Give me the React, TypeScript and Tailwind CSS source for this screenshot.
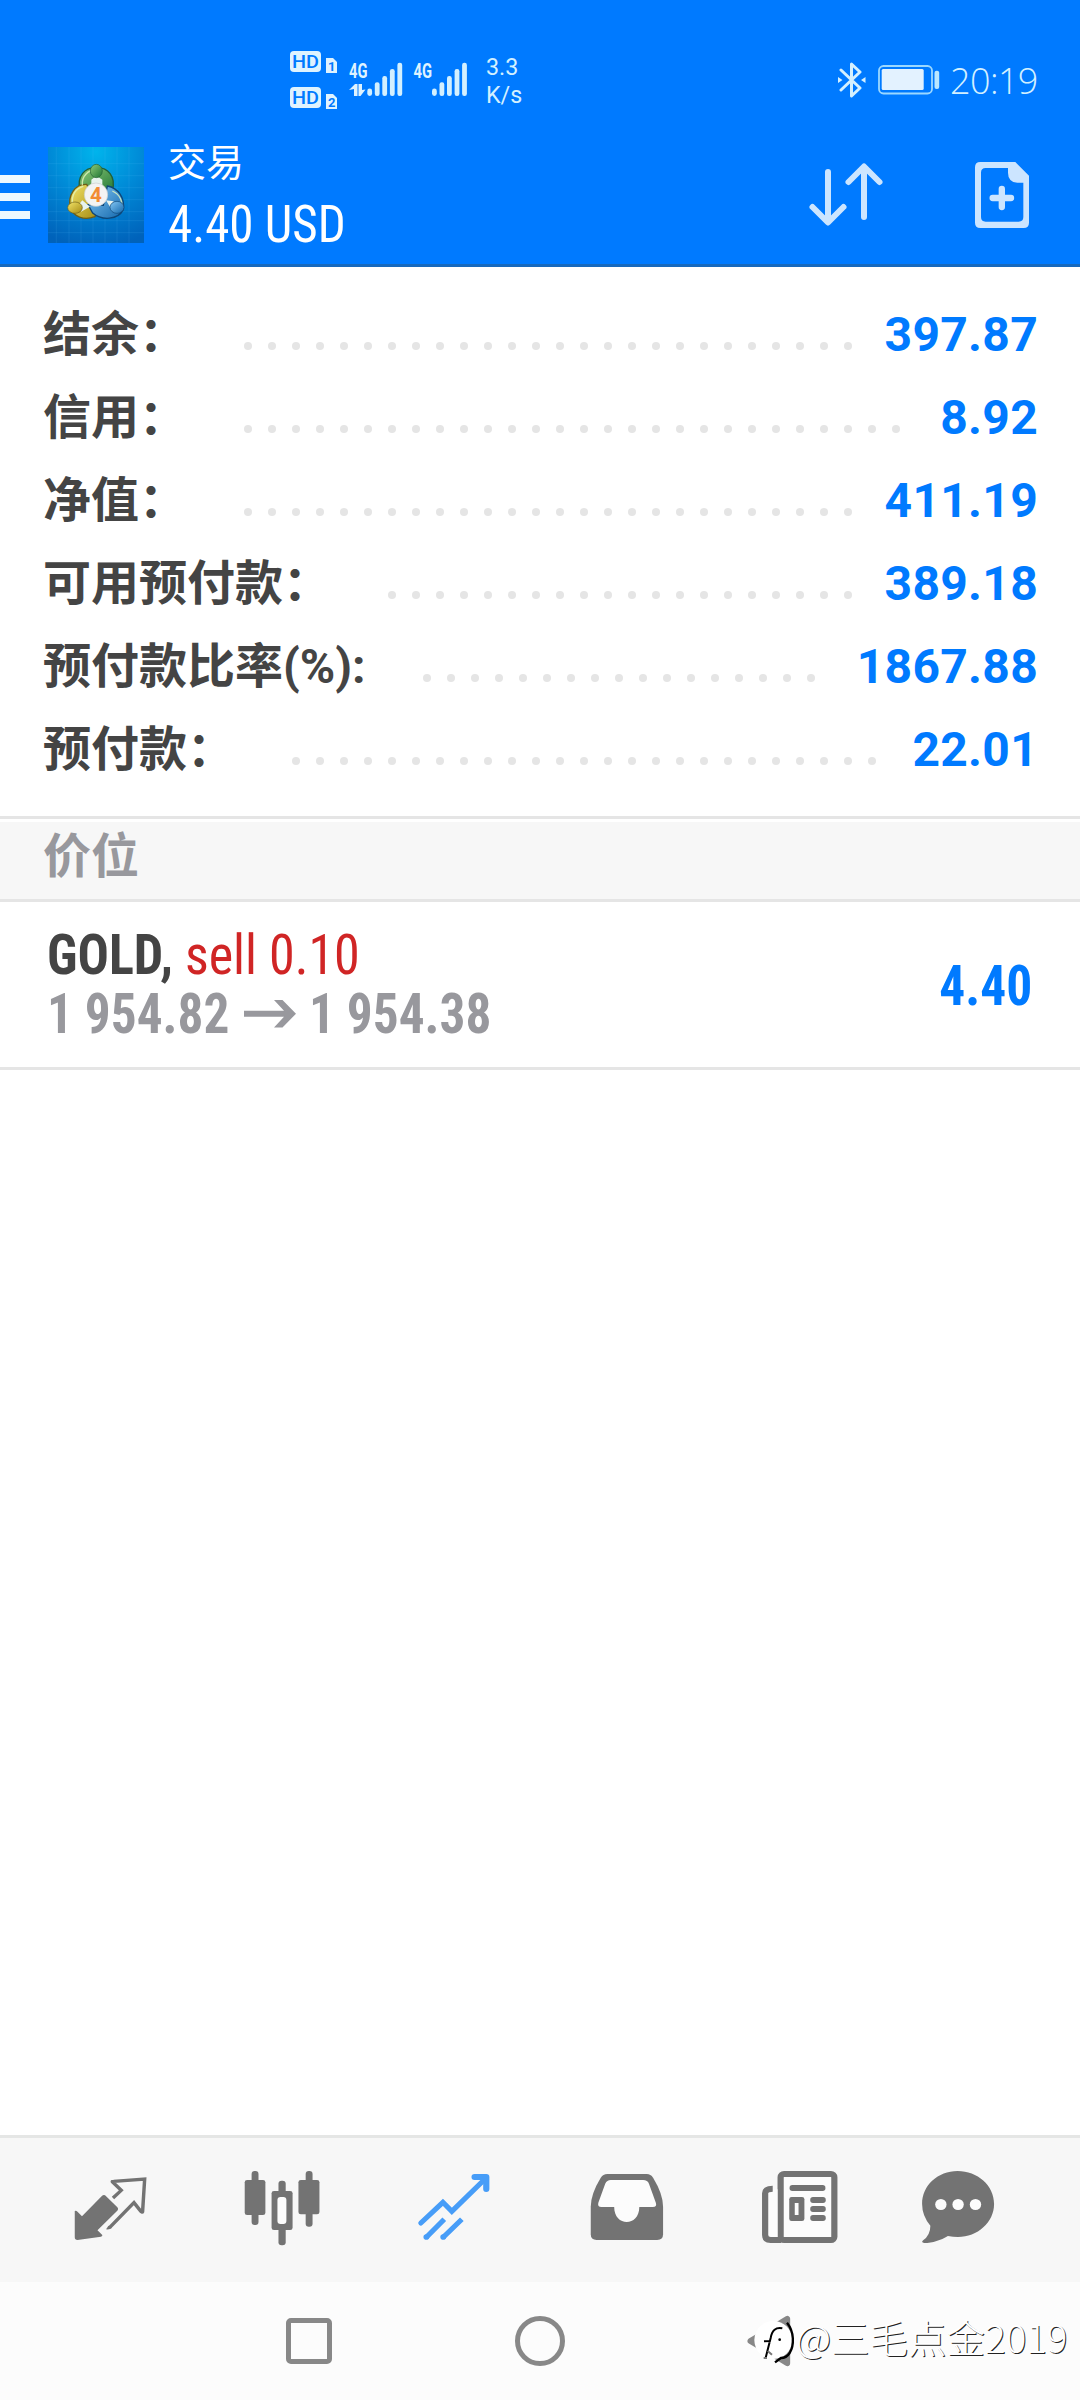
import React from "react";

type SummaryItem = {
  label: string;
  value: string;
  dots: number;
  labelWidth: string;
};

const summary: SummaryItem[] = [
  { label: "结余：", value: "397.87", dots: 26, labelWidth: "w-[201px]" },
  { label: "信用：", value: "8.92", dots: 28, labelWidth: "w-[201px]" },
  { label: "净值：", value: "411.19", dots: 26, labelWidth: "w-[201px]" },
  { label: "可用预付款：", value: "389.18", dots: 20, labelWidth: "w-[345px]" },
  { label: "预付款比率(%):", value: "1867.88", dots: 17, labelWidth: "w-[380px]" },
  { label: "预付款：", value: "22.01", dots: 25, labelWidth: "w-[249px]" },
];

const SignalBars = ({ x }: { x: number }) => (
  <g fill="#d3f0ff">
    <rect x={x} y="88.5" width="4.8" height="7.5" rx="2.4" />
    <rect x={x + 7.5} y="82.3" width="4.8" height="13.7" rx="2.2" />
    <rect x={x + 15} y="76" width="4.8" height="20" rx="2.2" />
    <rect x={x + 22.6} y="69" width="4.8" height="27" rx="2.2" />
    <rect x={x + 30.1} y="62.7" width="4.8" height="33.3" rx="2.2" />
  </g>
);

const NetworkIcons = () => (
  <svg width="190" height="70" viewBox="285 45 190 70" className="font-[Roboto] font-bold">
    <g fill="#dff3ff">
      <rect x="290" y="51" width="31" height="21" rx="4" />
      <rect x="290" y="87" width="31" height="21" rx="4" />
      <path d="M326 58h7l4 4v11h-11z" />
      <path d="M326 94h7l4 4v11h-11z" />
      <text x="349" y="78" fontSize="20" textLength="18.500" lengthAdjust="spacingAndGlyphs">4G</text>
      <text x="413.5" y="78" fontSize="20" textLength="18.500" lengthAdjust="spacingAndGlyphs">4G</text>
      <path d="M349 90l6-6h2.500v12h-3.500v-7zM358.500 84h3.500v6l3.500-.5-5 6.500h-2z" />
    </g>
    <g fill="#007aff">
      <text x="292" y="68" fontSize="19" fontWeight="500" textLength="27" lengthAdjust="spacingAndGlyphs">HD</text>
      <text x="292" y="104" fontSize="19" fontWeight="500" textLength="27" lengthAdjust="spacingAndGlyphs">HD</text>
      <text x="328" y="71" fontSize="13">1</text>
      <text x="328" y="107" fontSize="13">2</text>
    </g>
    <SignalBars x={367.3} />
    <SignalBars x={432} />
  </svg>
);

const BluetoothIcon = () => (
  <svg width="28" height="36" viewBox="0 0 28 36" fill="none" stroke="#d3f0ff" strokeWidth="3" strokeLinejoin="round" strokeLinecap="round">
    <path d="M3 8L22 26l-8.500 8V2l8.500 8L3 28" />
    <path d="M0 15v6l4.500-3zM27.500 15v6l-4.500-3z" fill="#d3f0ff" stroke="none" />
  </svg>
);

const BatteryIcon = () => (
  <svg width="62" height="30" viewBox="0 0 62 30">
    <rect x="1" y="1" width="53" height="27.500" rx="4.500" fill="none" stroke="#9bd8ff" strokeWidth="1.800" />
    <rect x="3.700" y="4" width="42" height="21" rx="1.500" fill="#e3f2ff" />
    <rect x="56.500" y="5.700" width="4.700" height="18.300" rx="2" fill="#b9e6ff" />
  </svg>
);

const AppLogo = () => (
  <svg width="96" height="96" viewBox="144 51 288 288">
    <defs>
      <radialGradient id="sky" cx="0.5" cy="0.050" r="1">
        <stop offset="0" stopColor="#00b4ec" />
        <stop offset="0.500" stopColor="#0088d6" />
        <stop offset="1" stopColor="#0062ba" />
      </radialGradient>
      <linearGradient id="green" x1="0" y1="0" x2="1" y2="1">
        <stop offset="0" stopColor="#8fcb78" />
        <stop offset="1" stopColor="#1d7434" />
      </linearGradient>
      <linearGradient id="yellow" x1="0" y1="0" x2="1" y2="1">
        <stop offset="0" stopColor="#f3e469" />
        <stop offset="1" stopColor="#a48a12" />
      </linearGradient>
      <linearGradient id="blue" x1="0" y1="0" x2="1" y2="1">
        <stop offset="0" stopColor="#85c8f5" />
        <stop offset="1" stopColor="#1267ac" />
      </linearGradient>
    </defs>
    <rect x="144" y="51" width="288" height="288" fill="url(#sky)" />
    <path
      d="M169 51v288M207 51v288M243 51v288M279 51v288M315 51v288M351 51v288M387 51v288M144 101h288M144 137h288M144 173h288M144 209h288M144 245h288M144 272h288M144 308h288"
      stroke="#5cc4f5"
      strokeOpacity="0.200"
      strokeWidth="2"
    />
    <g strokeWidth="4">
      <path d="M240 182C229 138 256 111 289 113C323 111 349 140 337 181L331 194L245 179Z" fill="url(#green)" stroke="#245f35" />
      <path d="M260 163C225 161 203 196 211 231C220 260 251 273 285 260L296 229Z" fill="url(#yellow)" stroke="#6d5e17" />
      <path d="M322 168C355 174 375 204 370 239C354 270 306 273 278 249L264 224L310 226Z" fill="url(#blue)" stroke="#0e4677" />
    </g>
    <path d="M247 166C244 137 267 119 287 120M218 223C213 196 227 175 250 169M337 183C361 194 369 216 365 236" fill="none" stroke="#e5f5be" strokeOpacity="0.800" strokeWidth="4" />
    <path d="M274 149L289 137L307 149V174H274ZM235 226L247 211L270 230L243 245ZM318 211L341 214L335 239Z" fill="#e7f3ee" />
    <ellipse cx="289" cy="123" rx="18" ry="20" fill="url(#green)" stroke="#245f35" strokeWidth="2" />
    <ellipse cx="225" cy="233" rx="22" ry="17" fill="url(#yellow)" stroke="#6d5e17" strokeWidth="2" />
    <ellipse cx="351" cy="232" rx="21" ry="18" fill="url(#blue)" stroke="#0e4677" strokeWidth="2" />
    <circle cx="288" cy="194" r="35" fill="#f3f3f3" stroke="#c9cfcf" strokeWidth="2" />
    <text x="288" y="216" textAnchor="middle" fontSize="62" fill="#f28c35" className="font-[Roboto] font-bold">4</text>
  </svg>
);

const SortIcon = () => (
  <svg width="76" height="68" viewBox="808 161 76 68" fill="none" stroke="#cce5ff" strokeWidth="6" strokeLinecap="round" strokeLinejoin="round">
    <path d="M828 172v50M812.500 207l15.500 15.500 15.500-15.500M864 217v-50M848.500 182l15.500-15.500 15.500 15.500" />
  </svg>
);

const NewOrderIcon = () => (
  <svg width="54" height="66" viewBox="585 66 162 198">
    <path fillRule="evenodd" fill="#cce5ff" d="M600 66H706L747 107V248Q747 264 731 264H601Q585 264 585 248V82Q585 66 601 66ZM684 84H617Q603 84 603 98V231Q603 245 617 245H716Q730 245 730 231V128H712Q684 126 684 98Z" />
    <path d="M665.500 147v54M638 174h55" stroke="#cce5ff" strokeWidth="19" strokeLinecap="round" />
  </svg>
);

const PriceArrow = () => (
  <svg width="52" height="28" viewBox="0 0 52 28" fill="#98989d">
    <path d="M0 10.800H40L30 0h8.500L52 13.700 38.500 27.500H30L40 16.800H0z" />
  </svg>
);

const TabIcon = ({ box, className, children }: { box: string; className: string; children: React.ReactNode }) => (
  <svg width="78" height="75" viewBox={box} preserveAspectRatio="none" className={"shrink-0 overflow-visible " + className}>
    {children}
  </svg>
);

const TabBar = () => (
  <nav className="flex h-[147px] items-start border-t-[3px] border-[#e5e6e5] bg-[#f7f7f7] pt-8 text-[#737373]">
    {/* Quotes */}
    <TabIcon box="207 150 226.5 225" className="ml-[72px]">
      <path fill="currentColor" d="M215 273Q219 271 223 275L236 289L293 229Q300 221 306 229L338 261Q344 267 337 274L281 331L295 345Q296 349 291 350L223 360Q215 360 215 352Z" />
      <path fill="none" stroke="currentColor" strokeWidth="10" d="M326 234L350 211L325 186Q322 184 328 184L418 177L412 275Q411 278 407 274L387 248L316 323" />
      <path d="M306 328L313 317L323 323Q317 330 306 328" fill="currentColor" />
    </TabIcon>
    {/* Chart */}
    <TabIcon box="704 150 226.5 225" className="ml-[93px]">
      <g fill="currentColor">
        <rect x="729" y="153" width="20" height="162" rx="9" />
        <rect x="709" y="180" width="60" height="105" rx="7" />
        <rect x="807" y="182" width="21" height="194" rx="9" />
        <rect x="787" y="213" width="61" height="117" rx="7" />
        <rect x="886" y="153" width="20" height="167" rx="9" />
        <rect x="865" y="180" width="61" height="103" rx="7" />
      </g>
      <rect x="804" y="231" width="26" height="81" rx="9" fill="#fcfcfc" />
    </TabIcon>
    {/* Trade */}
    <TabIcon box="1204 150 226.5 225" className="ml-[94px] text-[#479df8]">
      <g fill="none" stroke="currentColor">
        <path d="M1221 309L1285 247L1311 274L1408 176" strokeWidth="15" strokeLinecap="round" />
        <path d="M1377 171H1411V207" strokeWidth="18" strokeLinecap="round" strokeLinejoin="round" />
        <path d="M1237 352L1289 298M1286 352L1340 298" strokeWidth="15" />
      </g>
      <circle cx="1237" cy="351" r="8.500" fill="currentColor" />
      <circle cx="1286" cy="351" r="8.500" fill="currentColor" />
    </TabIcon>
    {/* History */}
    <TabIcon box="138 150 226.5 225" className="ml-[95px]">
      <path fill="currentColor" d="M194 162H309Q320 162 327 173Q356 222 356 260V343Q356 360 339 360H163Q146 360 146 343V260Q146 222 175 173Q182 162 194 162Z" />
      <path fill="#fcfcfc" d="M204 180H298Q311 180 315 191L335 248Q339 261 326 261H287C287 321 214 321 214 261H177Q165 261 168 248L188 191Q193 180 204 180Z" />
    </TabIcon>
    {/* News */}
    <TabIcon box="642 150 226.5 225" className="ml-[95px]">
      <rect x="699" y="162" width="156" height="198" rx="10" fill="#fcfcfc" stroke="currentColor" strokeWidth="18" />
      <path d="M663 216V342Q663 351 672 351H690V208L676 210Q663 212 663 220Z" fill="#fcfcfc" />
      <path d="M676 206Q654 206 654 220V345Q654 360 670 360H700" fill="none" stroke="currentColor" strokeWidth="18" />
      <g fill="currentColor">
        <rect x="725" y="195" width="104" height="18" rx="8" />
        <rect x="785" y="231" width="45" height="18" rx="8" />
        <rect x="785" y="258" width="45" height="18" rx="8" />
        <rect x="785" y="285" width="45" height="18" rx="8" />
        <rect x="724" y="231" width="44" height="72" rx="7" />
      </g>
      <rect x="740" y="249" width="11" height="36" fill="#fcfcfc" />
    </TabIcon>
    {/* Messages */}
    <TabIcon box="1100 150 226.5 225" className="ml-[80px]">
      <path fill="currentColor" d="M1212 153C1270 153 1318 196 1318 252C1318 307 1270 351 1213 351Q1199 351 1184 348C1163 361 1140 369 1115 369Q1105 367 1112 361Q1133 345 1133 317Q1109 288 1109 252C1109 196 1155 153 1212 153Z" />
      <g fill="#fcfcfc">
        <circle cx="1163.500" cy="253.500" r="16.500" />
        <circle cx="1213.500" cy="253.500" r="16.500" />
        <circle cx="1264" cy="253.500" r="16.500" />
      </g>
    </TabIcon>
  </nav>
);

const SystemNav = () => (
  <div className="flex h-[118px] items-center bg-[#fcfcfc]">
    <div className="ml-[286px] size-[46px] rounded-[5px] border-[5px] border-[#888]" />
    <div className="ml-[183px] size-[50px] rounded-full border-[5px] border-[#888]" />
    <svg width="48" height="54" viewBox="80 102 144 162" className="ml-[182px] shrink-0">
      <path d="M201 116V250L90 183Z" fill="#888" stroke="#888" strokeWidth="17" strokeLinejoin="round" />
      <circle cx="159" cy="180" r="57" fill="#fff" />
      <path d="M200 128C222 155 222 195 208 219Q198 234 182 234L164 247" fill="none" stroke="#000" strokeWidth="7" />
      <path d="M186 145Q157 139 151 174L136 233M131 184L151 183" fill="none" stroke="#000" strokeWidth="6" />
      <circle cx="178" cy="179" r="4" fill="#000" />
      <path d="M142 213L155 224M130 234H140" stroke="#777" strokeWidth="6" />
    </svg>
    <span className="ml-px whitespace-nowrap pb-[10px] font-['Noto_Sans_CJK_SC',sans-serif] text-[38.500px] font-light leading-none text-white [text-shadow:1px_1px_0_#222]">
      @三毛点金2019
    </span>
  </div>
);

const App: React.FC = () => {
  return (
    <div className="flex h-[2400px] w-[1080px] flex-col overflow-hidden bg-white font-[Roboto,'Noto_Sans_CJK_SC',sans-serif]">
      <header className="h-[267px] shrink-0 border-b-[3px] border-[#1769bd] bg-[#007aff]">
        {/* Status bar */}
        <div className="flex h-[130px] items-start pl-[285px] pt-[45px] text-[#d3f0ff]">
          <NetworkIcons />
          <div className="ml-[11px] mt-[8px] w-[61px] origin-left scale-x-95 text-[24.500px] leading-7">
            <div>3.3</div>
            <div>K/s</div>
          </div>
          <div className="ml-[291px] mt-[17px]">
            <BluetoothIcon />
          </div>
          <div className="ml-[12px] mt-[20px]">
            <BatteryIcon />
          </div>
          <span className="ml-[10px] mt-[16px] font-['Open_Sans',sans-serif] text-[36px] font-light leading-[40px] tracking-[-0.6px]">20:19</span>
        </div>

        {/* Title bar */}
        <div className="flex h-[134px] items-start text-white">
          <div className="mt-[45px] flex w-[30px] flex-col gap-[10px]">
            <i className="h-2 bg-[#edf8ff]" />
            <i className="h-2 bg-[#edf8ff]" />
            <i className="h-2 bg-[#edf8ff]" />
          </div>
          <div className="ml-[18px] mt-[17px]">
            <AppLogo />
          </div>
          <div className="ml-6 w-[640px] pt-3">
            <div className="text-[38px] leading-[42px]">交易</div>
            <div className="mt-[11px] origin-left scale-x-[0.943] font-['Roboto_Condensed',sans-serif] text-[52px] leading-[60px]">4.40 USD</div>
          </div>
          <div className="mt-[31px]">
            <SortIcon />
          </div>
          <div className="ml-[91px] mt-[32px]">
            <NewOrderIcon />
          </div>
        </div>
      </header>

      {/* Account summary */}
      <section className="h-[552px] shrink-0 border-b-[3px] border-[#e5e5e5] pl-[43px] pr-[42px] pt-[26px]">
        {summary.map((item) => (
          <div key={item.label} className="flex h-[83px] items-center">
            <span className={"shrink-0 whitespace-nowrap text-[48px] font-bold leading-none text-[#444] " + item.labelWidth}>{item.label}</span>
            <div className="flex gap-4 pt-[23px]">
              {Array.from({ length: item.dots }, (_, i) => (
                <i key={i} className="size-2 shrink-0 rounded-full bg-[#e5e5e5]" />
              ))}
            </div>
            <span className="ml-auto text-[48px] font-bold leading-none tracking-[0.3px] text-[#007aff]">{item.value}</span>
          </div>
        ))}
      </section>

      {/* Positions */}
      <div className="mt-[3px] flex h-[80px] shrink-0 items-center border-b-[3px] border-[#e5e5e5] bg-[#f7f7f7] pl-[43px] pb-[8px] text-[48px] font-bold leading-none text-[#98989d]">
        价位
      </div>
      <div className="flex h-[168px] shrink-0 items-center justify-between border-b-[3px] border-[#e5e5e5] pl-[47px] pr-[48px] font-['Roboto_Condensed',sans-serif] text-[55px]">
        <div className="leading-[59px]">
          <div className="origin-left scale-x-[0.947] whitespace-nowrap font-bold text-[#444]">
            GOLD, <span className="font-normal text-[#d02525]">sell 0.10</span>
          </div>
          <div className="flex items-center whitespace-nowrap font-bold text-[#98989d]">
            <span className="w-[197px] origin-left scale-x-[0.933]">1 954.82</span>
            <PriceArrow />
            <span className="ml-[13px] origin-left scale-x-[0.933]">1 954.38</span>
          </div>
        </div>
        <span className="origin-right scale-x-[0.937] pt-[3px] font-bold text-[#007aff]">4.40</span>
      </div>

      <div className="flex-1" />
      <TabBar />
      <SystemNav />
    </div>
  );
};

export default App;
